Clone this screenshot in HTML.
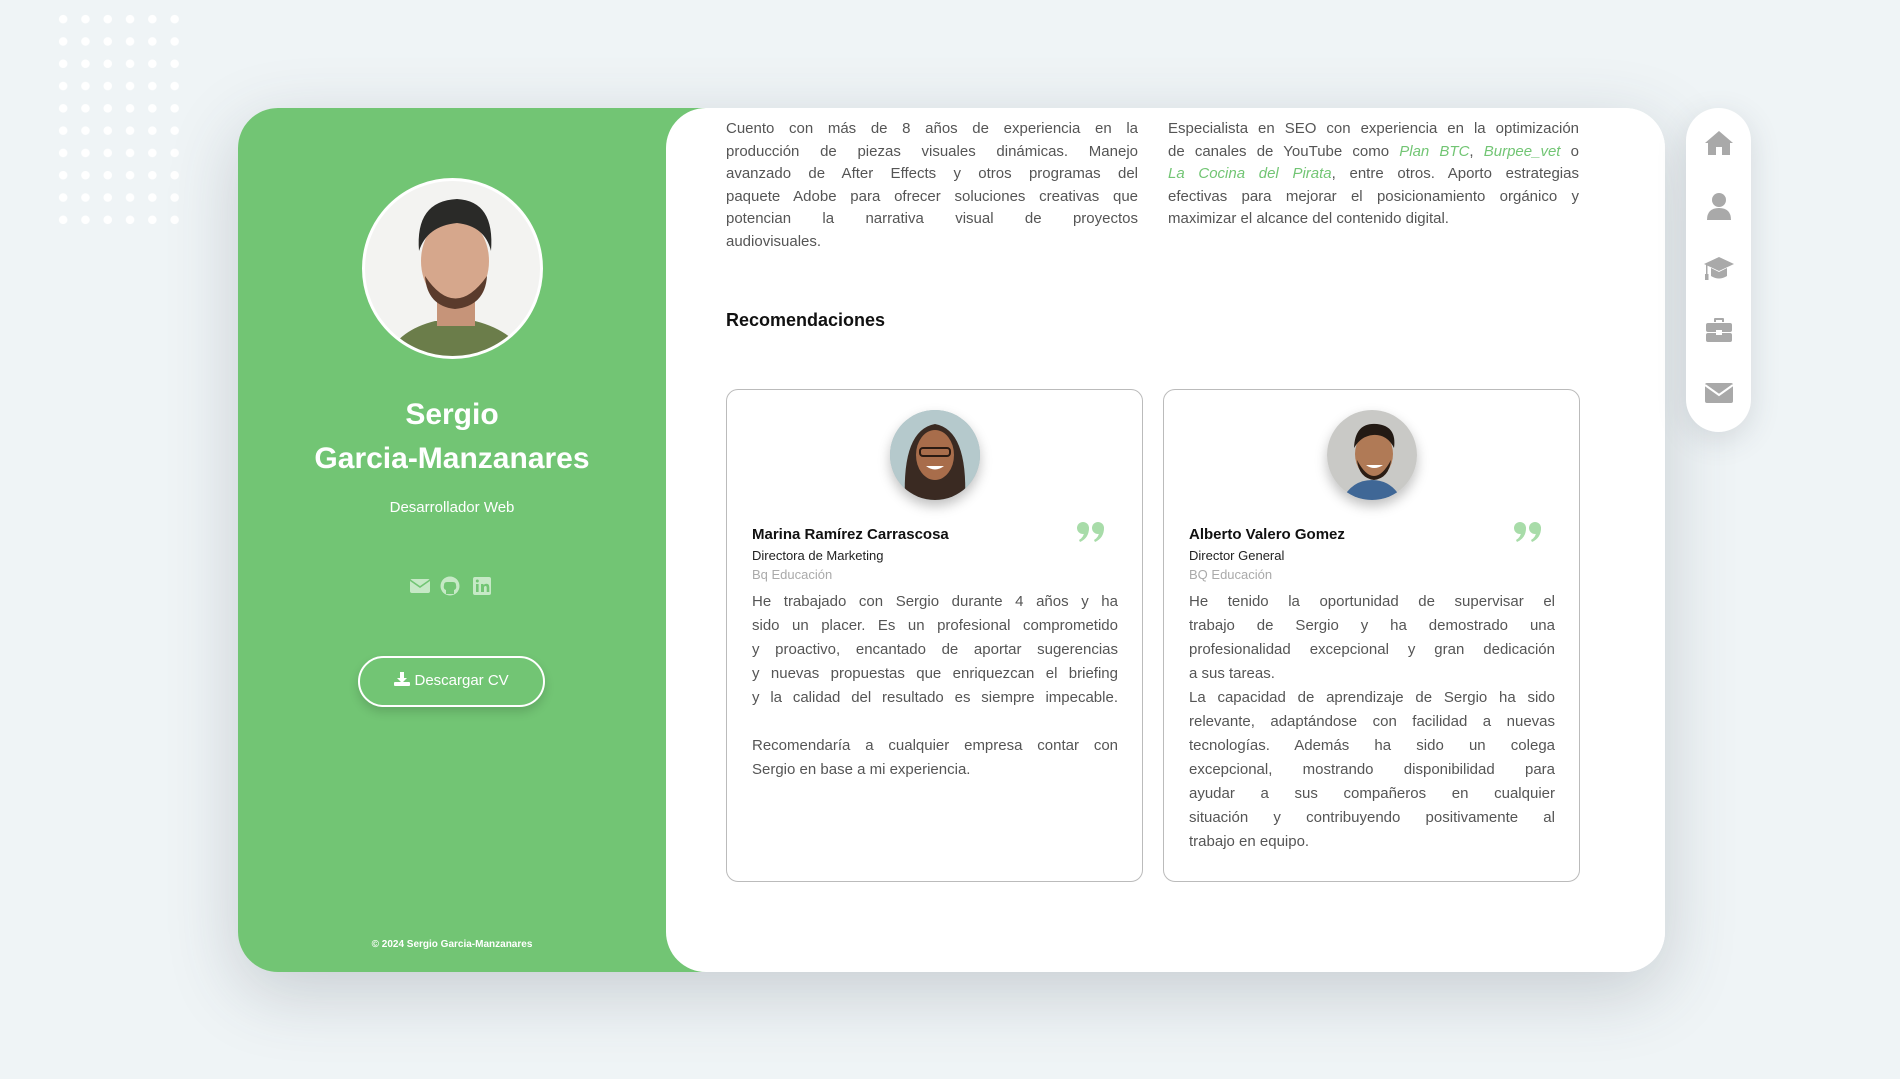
<!DOCTYPE html>
<html><head><meta charset="utf-8"><style>
*{margin:0;padding:0;box-sizing:border-box}
body{width:1900px;height:1079px;overflow:hidden;background:#eff4f6;font-family:"Liberation Sans",sans-serif;position:relative}
.dots{position:absolute;left:52px;top:8px;width:140px;height:224px;background-image:radial-gradient(circle,#fff 4px,transparent 4.5px);background-size:22.3px 22.3px}
.card{position:absolute;left:238px;top:108px;width:1427px;height:864px;border-radius:40px;background:#fff;box-shadow:0 20px 70px rgba(60,70,80,.22);overflow:hidden}
.green{position:absolute;left:0;top:0;width:470px;height:864px;background:#72c574}
.main{position:absolute;left:428px;top:0;width:999px;height:864px;background:#fff;border-radius:40px 0 0 40px}
.abs{position:absolute}
.j div{text-align:justify;text-align-last:justify;white-space:nowrap}
.j div.l{text-align-last:left}
.top{font-size:15px;line-height:22.5px;color:#555}
.rc{position:absolute;top:281px;width:417px;height:493px;border:1.5px solid #bbb;border-radius:12px;background:#fff}
.rc .av{position:absolute;left:163px;top:20px;width:90px;height:90px;border-radius:50%;box-shadow:0 6px 12px rgba(0,0,0,.25);overflow:hidden}
.rc .nm{position:absolute;left:25px;top:136px;font-size:15px;font-weight:bold;color:#111}
.rc .ro{position:absolute;left:25px;top:158px;font-size:13px;color:#222}
.rc .co{position:absolute;left:25px;top:177px;font-size:13px;color:#aaa}
.rc .q{position:absolute;left:350px;top:132px}
.rc .tx{position:absolute;left:25px;top:200px;width:366px;font-size:15px;line-height:24px;color:#555}
.nav{position:absolute;left:1686px;top:108px;width:65px;height:324px;border-radius:33px;background:#fff;box-shadow:0 8px 30px rgba(60,70,80,.15)}
.nav svg{position:absolute;left:18px}
</style></head><body>
<div class="dots"></div>
<div class="card">
 <div class="green">
  <div class="abs" style="left:124px;top:70px;width:181px;height:181px;border-radius:50%;border:3px solid #fff;overflow:hidden;background:#f3f3f1">
   <svg width="181" height="181" viewBox="0 0 181 181"><path d="M20 181 Q30 150 70 140 L110 140 Q150 150 165 181Z" fill="#6b7d4a"/><rect x="72" y="110" width="38" height="35" fill="#c69479"/><ellipse cx="90" cy="80" rx="34" ry="44" fill="#d6a78c"/><path d="M54 70 Q50 20 92 18 Q130 20 126 70 Q120 45 92 42 Q62 45 54 70Z" fill="#2a2a28"/><path d="M60 95 Q90 140 122 95 Q120 125 90 128 Q62 125 60 95Z" fill="#5a3b2c"/></svg>
  </div>
  <div class="abs" style="left:0;width:428px;top:285px;text-align:center;color:#fff;font-size:30px;font-weight:bold;line-height:44px">Sergio<br>Garcia-Manzanares</div>
  <div class="abs" style="left:0;width:428px;top:391px;text-align:center;color:#fff;font-size:15px">Desarrollador Web</div>
  <div class="abs" style="left:172px;top:468px">
   <svg width="90" height="20" viewBox="0 0 90 20" fill="#c6e9c6"><rect x="0" y="3" width="20" height="14" rx="2"/><path d="M0 4 L10 11 L20 4" stroke="#72c574" stroke-width="1.6" fill="none"/><circle cx="40" cy="10" r="9.5"/><path d="M36 18 L36 14 Q33 13 34 9 Q34 6 37 6 L43 6 Q46 6 46 9 Q47 13 44 14 L44 18Z" fill="#72c574"/><rect x="63" y="1" width="18" height="18" rx="2"/><rect x="66" y="8" width="2.6" height="8" fill="#72c574"/><circle cx="67.3" cy="5" r="1.5" fill="#72c574"/><path d="M71 8h2.5v1.2q1-1.5 3-1.5 2.8 0 2.8 3.5V16h-2.6v-4.4q0-1.6-1.3-1.6-1.4 0-1.4 1.8V16H71Z" fill="#72c574"/></svg>
  </div>
  <div class="abs" style="left:120px;top:548px;width:187px;height:51px;border:2.5px solid #fff;border-radius:26px;box-shadow:0 5px 10px rgba(0,0,0,.15);color:#fff;font-size:15px;text-align:center;line-height:46px"><svg width="16" height="14" viewBox="0 0 16 14" fill="#fff" style="vertical-align:-1px"><path d="M6 0h4v6h3l-5 5-5-5h3z"/><rect x="0" y="10" width="16" height="4" rx="1"/></svg> Descargar CV</div>
  <div class="abs" style="left:0;width:428px;top:831px;text-align:center;color:#fff;font-size:10px;font-weight:bold">© 2024 Sergio Garcia-Manzanares</div>
 </div>
 <div class="main">
  <div class="abs j top" style="left:60px;top:10px;width:412px">
   <div>Cuento con más de 8 años de experiencia en la</div>
   <div>producción de piezas visuales dinámicas. Manejo</div>
   <div>avanzado de After Effects y otros programas del</div>
   <div>paquete Adobe para ofrecer soluciones creativas que</div>
   <div>potencian la narrativa visual de proyectos</div>
   <div class="l">audiovisuales.</div>
  </div>
  <div class="abs j top" style="left:502px;top:10px;width:411px">
   <div>Especialista en SEO con experiencia en la optimización</div>
   <div>de canales de YouTube como <i style="color:#72c574">Plan BTC</i>, <i style="color:#72c574">Burpee_vet</i> o</div>
   <div><i style="color:#72c574">La Cocina del Pirata</i>, entre otros. Aporto estrategias</div>
   <div>efectivas para mejorar el posicionamiento orgánico y</div>
   <div class="l">maximizar el alcance del contenido digital.</div>
  </div>
  <div class="abs" style="left:60px;top:202px;font-size:18px;font-weight:bold;color:#111">Recomendaciones</div>
  <div class="rc" style="left:60px">
   <div class="av" style="background:#9fb9bd"><svg width="90" height="90"><rect width="90" height="90" fill="#b5c9cc"/><path d="M15 90 Q12 20 45 14 Q78 20 75 90Z" fill="#3a2a22"/><ellipse cx="45" cy="45" rx="19" ry="25" fill="#a86d4b"/><rect x="30" y="38" width="30" height="8" rx="3" fill="none" stroke="#2a1a12" stroke-width="2"/><path d="M36 56 Q45 63 54 56" fill="#fff"/></svg></div>
   <svg class="q" width="28" height="20" viewBox="0 0 28 20" fill="#a8dca9"><circle cx="6" cy="6" r="6"/><path d="M12 6 Q12 16 3 20 L2 18 Q7 15 7 10Z"/><circle cx="21" cy="6" r="6"/><path d="M27 6 Q27 16 18 20 L17 18 Q22 15 22 10Z"/></svg>
   <div class="nm">Marina Ramírez Carrascosa</div>
   <div class="ro">Directora de Marketing</div>
   <div class="co">Bq Educación</div>
   <div class="tx j">
    <div>He trabajado con Sergio durante 4 años y ha</div>
    <div>sido un placer. Es un profesional comprometido</div>
    <div>y proactivo, encantado de aportar sugerencias</div>
    <div>y nuevas propuestas que enriquezcan el briefing</div>
    <div>y la calidad del resultado es siempre impecable.</div>
    <div class="l">&nbsp;</div>
    <div>Recomendaría a cualquier empresa contar con</div>
    <div class="l">Sergio en base a mi experiencia.</div>
   </div>
  </div>
  <div class="rc" style="left:497px">
   <div class="av"><svg width="90" height="90"><rect width="90" height="90" fill="#c9c9c6"/><path d="M15 90 Q25 70 45 70 Q65 70 75 90Z" fill="#3f6796"/><ellipse cx="47" cy="44" rx="19" ry="24" fill="#b07a56"/><path d="M27 38 Q28 12 50 14 Q70 16 67 38 Q60 24 46 25 Q34 26 27 38Z" fill="#231a14"/><path d="M30 50 Q47 82 64 50 Q62 68 47 70 Q32 68 30 50Z" fill="#2b1d14"/><path d="M39 55 Q47 61 56 55" fill="#fff"/></svg></div>
   <svg class="q" width="28" height="20" viewBox="0 0 28 20" fill="#a8dca9"><circle cx="6" cy="6" r="6"/><path d="M12 6 Q12 16 3 20 L2 18 Q7 15 7 10Z"/><circle cx="21" cy="6" r="6"/><path d="M27 6 Q27 16 18 20 L17 18 Q22 15 22 10Z"/></svg>
   <div class="nm">Alberto Valero Gomez</div>
   <div class="ro">Director General</div>
   <div class="co">BQ Educación</div>
   <div class="tx j">
    <div>He tenido la oportunidad de supervisar el</div>
    <div>trabajo de Sergio y ha demostrado una</div>
    <div>profesionalidad excepcional y gran dedicación</div>
    <div class="l">a sus tareas.</div>
    <div>La capacidad de aprendizaje de Sergio ha sido</div>
    <div>relevante, adaptándose con facilidad a nuevas</div>
    <div>tecnologías. Además ha sido un colega</div>
    <div>excepcional, mostrando disponibilidad para</div>
    <div>ayudar a sus compañeros en cualquier</div>
    <div>situación y contribuyendo positivamente al</div>
    <div class="l">trabajo en equipo.</div>
   </div>
  </div>
 </div>
</div>
<div class="nav">
 <svg style="top:22px" width="30" height="26" viewBox="0 0 30 26" fill="#a9a9a9"><path d="M15 1 L29 13 L26 13 L26 25 L18 25 L18 17 L12 17 L12 25 L4 25 L4 13 L1 13Z"/></svg>
 <svg style="top:84px" width="30" height="28" viewBox="0 0 30 28" fill="#a9a9a9"><circle cx="15" cy="8" r="7"/><path d="M3 28 Q3 16 15 16 Q27 16 27 28Z"/></svg>
 <svg style="top:147px" width="30" height="26" viewBox="0 0 30 26" fill="#a9a9a9"><path d="M15 2 L30 9 L15 16 L0 9Z"/><path d="M7 13 L7 21 Q15 26 23 21 L23 13 L15 17Z"/><rect x="2" y="10" width="1.5" height="11"/><rect x="1" y="19" width="3.5" height="6"/></svg>
 <svg style="top:209px" width="30" height="26" viewBox="0 0 30 26" fill="#a9a9a9"><path d="M10 5 V2 Q10 1 11 1 H19 Q20 1 20 2 V5 H18 V3 H12 V5Z"/><rect x="2" y="6" width="26" height="9" rx="2"/><rect x="2" y="16" width="26" height="9" rx="2"/><rect x="12" y="13" width="6" height="5" fill="#fff"/></svg>
 <svg style="top:273px" width="30" height="24" viewBox="0 0 30 24" fill="#a9a9a9"><rect x="1" y="2" width="28" height="20" rx="2"/><path d="M1 4 L15 14 L29 4" stroke="#fff" stroke-width="2" fill="none"/></svg>
</div>
</body></html>
